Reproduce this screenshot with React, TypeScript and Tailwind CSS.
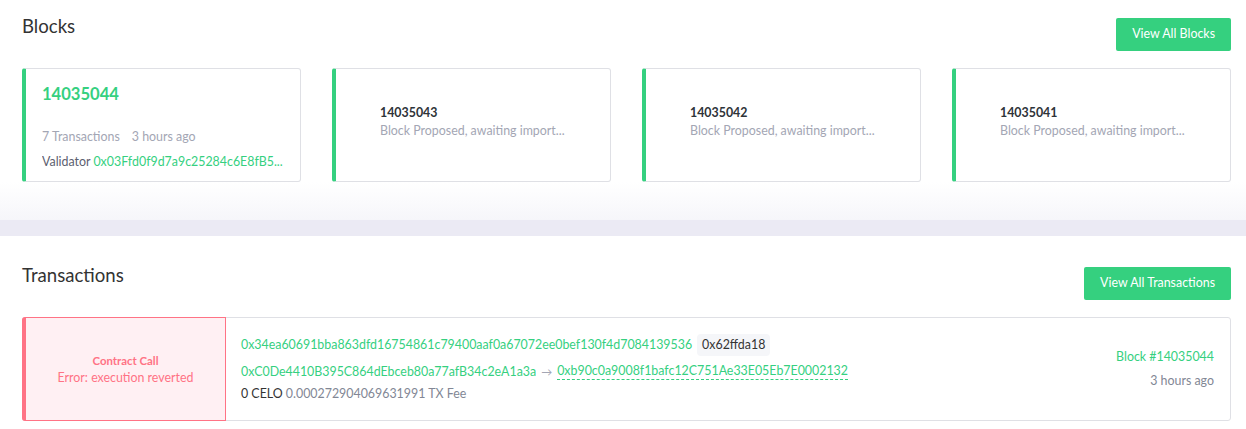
import React from 'react';

const green = 'text-[#35d07f]';

const blocks = [
  { n: '14035043' },
  { n: '14035042' },
  { n: '14035041' },
];

const LatestBlock = () => (
  <div className="h-[114px] rounded-[3px] border border-[#dfe0e5] border-l-4 border-l-[#35d07f] pl-[16px] pr-[16px] pt-[13px] bg-white">
    <div className={`text-[16.6px] font-bold leading-[24px] ${green}`}>14035044</div>
    <div className="mt-[22px] flex gap-[12px] text-[12.4px] leading-[18px] text-[#a3a6b4]">
      <span>7 Transactions</span>
      <span>3 hours ago</span>
    </div>
    <div className="mt-[7px] text-[12.4px] leading-[18px] text-[#5c6070] truncate">
      Validator <span className={green}>0x03Ffd0f9d7a9c25284c6E8fB5...</span>
    </div>
  </div>
);

const PendingBlock: React.FC<{ n: string }> = ({ n }) => (
  <div className="h-[114px] rounded-[3px] border border-[#dfe0e5] border-l-4 border-l-[#35d07f] pl-[44px] pb-[6px] flex flex-col justify-center bg-white">
    <div className="text-[12.4px] font-bold leading-[18px] text-[#2e3338]">{n}</div>
    <div className="text-[12.4px] leading-[18px] text-[#a3a6b4]">Block Proposed, awaiting import...</div>
  </div>
);

export default function App() {
  return (
    <div className="w-[1246px] h-[429px] bg-white overflow-hidden" style={{ fontFamily: 'Lato, "Noto Sans", sans-serif' }}>
      <section className="pl-[22px] pr-[15px] pt-[18px]">
        <div className="flex justify-between items-start h-[33px]">
          <h2 className="text-[18.6px] leading-[18px] -mt-[1px] text-[#333333]">Blocks</h2>
          <button className="h-[33px] px-[16px] bg-[#35d07f] text-white text-[12.4px] rounded-[2px]">View All Blocks</button>
        </div>
        <div className="mt-[17px] grid grid-cols-4 gap-[31px]">
          <LatestBlock />
          {blocks.map(b => <PendingBlock key={b.n} n={b.n} />)}
        </div>
      </section>
      <div className="h-[38px] bg-gradient-to-b from-white to-[#f6f6fa]" />
      <div className="h-[16px] bg-[#ebeaf4]" />
      <section className="pl-[22px] pr-[15px] pt-[31px]">
        <div className="flex justify-between items-start h-[33px]">
          <h2 className="text-[18.6px] leading-[18px] -mt-[1px] text-[#333333]">Transactions</h2>
          <button className="h-[33px] px-[16px] bg-[#35d07f] text-white text-[12.4px] rounded-[2px]">View All Transactions</button>
        </div>
        <div className="mt-[17px] h-[104px] flex rounded-[3px] border border-[#dfe0e5] bg-white">
          <div className="w-[204px] shrink-0 flex flex-col items-center justify-center bg-[#fff0f3] border border-[#ff7385] border-l-4 rounded-l-[3px] -my-px -ml-px">
            <div className="text-[11.4px] font-bold leading-[17px] text-[#ff7385]">Contract Call</div>
            <div className="text-[12.4px] leading-[17px] text-[#ff7385]">Error: execution reverted</div>
          </div>
          <div className="flex-1 pl-[15px] pt-[16px]">
            <div className="flex items-center gap-[5px] h-[22px]">
              <span className={`text-[12.4px] ${green}`}>0x34ea60691bba863dfd16754861c79400aaf0a67072ee0bef130f4d7084139536</span>
              <span className="h-[22px] px-[5px] flex items-center rounded-[4px] bg-[#f5f6f9] text-[12.4px] text-[#333333]">0x62ffda18</span>
            </div>
            <div className="mt-[6px] text-[12.4px] leading-[17px] flex items-center gap-[5px]">
              <span className={green}>0xC0De4410B395C864dEbceb80a77afB34c2eA1a3a</span>
              <span className="text-[#a3a6b4] text-[11px]">→</span>
              <span className={`${green} border-b border-dashed border-[#35d07f]`}>0xb90c0a9008f1bafc12C751Ae33E05Eb7E0002132</span>
            </div>
            <div className="mt-[5px] text-[12.4px] leading-[17px]">
              <span className="text-[#333333]">0 CELO</span>{' '}
              <span className="text-[#828795]">0.000272904069631991 TX Fee</span>
            </div>
          </div>
          <div className="pr-[16px] flex flex-col items-end justify-center gap-[6px] text-[12.4px] leading-[18px]">
            <span className={green}>Block #14035044</span>
            <span className="text-[#828795]">3 hours ago</span>
          </div>
        </div>
      </section>
    </div>
  );
}
